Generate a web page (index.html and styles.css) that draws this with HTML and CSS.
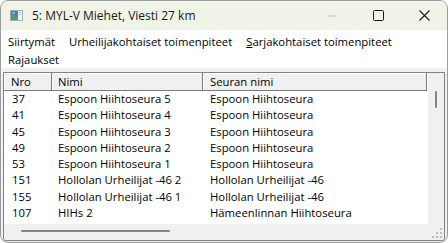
FILE: index.html
```html
<!DOCTYPE html>
<html>
<head>
<meta charset="utf-8">
<link rel="stylesheet" href="styles.css">
</head>
<body>
<div class="window">
  <div class="titlebar">
    <svg class="appicon" width="13" height="11" viewBox="0 0 13 11">
      <rect x="0" y="0" width="13" height="11" fill="#a3adb5"/>
      <rect x="1" y="1" width="11" height="9" fill="#eef1f3"/>
      <rect x="1" y="1" width="7" height="9" fill="#3d86a6"/>
      <rect x="1" y="5" width="7" height="5" fill="#4f9a78"/>
      <rect x="2" y="2" width="3" height="2" fill="#7fb6cf"/>
      <rect x="9" y="2" width="2" height="1" fill="#b0b8bf"/>
      <rect x="9" y="4" width="2" height="1" fill="#c4cbd1"/>
    </svg>
    <span class="title">5: MYL-V Miehet, Viesti 27 km</span>
    <div class="controls">
      <span class="ctl"><svg width="10" height="10" viewBox="0 0 10 10"><rect x="0" y="4.5" width="10" height="1" fill="#c4c4c4"/></svg></span>
      <span class="ctl"><svg width="11" height="11" viewBox="0 0 11 11"><rect x="0.5" y="0.5" width="10" height="10" rx="1" fill="none" stroke="#1a1a1a"/></svg></span>
      <span class="ctl"><svg width="11" height="11" viewBox="0 0 11 11"><path d="M0.5 0.5 L10.5 10.5 M10.5 0.5 L0.5 10.5" stroke="#1a1a1a" stroke-width="1.1"/></svg></span>
    </div>
  </div>
  <div class="menubar">
    <div class="menurow">
      <span class="mitem">Siirtymät</span>
      <span class="mitem">Urheilijakohtaiset toimenpiteet</span>
      <span class="mitem"><u>S</u>arjakohtaiset toimenpiteet</span>
    </div>
    <div class="menurow">
      <span class="mitem">Rajaukset</span>
    </div>
  </div>
  <div class="content">
    <div class="list">
      <div class="main">
        <div class="header">
          <div class="hcell c1">Nro</div>
          <div class="hcell c2">Nimi</div>
          <div class="hcell c3">Seuran nimi</div>
        </div>
        <div class="rows">
          <div class="row"><span class="c1">37</span><span class="c2">Espoon Hiihtoseura 5</span><span class="c3">Espoon Hiihtoseura</span></div>
          <div class="row"><span class="c1">41</span><span class="c2">Espoon Hiihtoseura 4</span><span class="c3">Espoon Hiihtoseura</span></div>
          <div class="row"><span class="c1">45</span><span class="c2">Espoon Hiihtoseura 3</span><span class="c3">Espoon Hiihtoseura</span></div>
          <div class="row"><span class="c1">49</span><span class="c2">Espoon Hiihtoseura 2</span><span class="c3">Espoon Hiihtoseura</span></div>
          <div class="row"><span class="c1">53</span><span class="c2">Espoon Hiihtoseura 1</span><span class="c3">Espoon Hiihtoseura</span></div>
          <div class="row"><span class="c1">151</span><span class="c2">Hollolan Urheilijat -46 2</span><span class="c3">Hollolan Urheilijat -46</span></div>
          <div class="row"><span class="c1">155</span><span class="c2">Hollolan Urheilijat -46 1</span><span class="c3">Hollolan Urheilijat -46</span></div>
          <div class="row"><span class="c1">107</span><span class="c2">HIHs 2</span><span class="c3">Hämeenlinnan Hiihtoseura</span></div>
        </div>
      </div>
      <div class="vscroll"><div class="vthumb"></div></div>
      <div class="hscroll"><div class="hthumb"></div></div>
      <div class="corner">
        <svg class="grip" width="12" height="12" viewBox="0 0 12 12">
          <rect x="9" y="1" width="2" height="2" fill="#bcbcbc"/>
          <rect x="9" y="5" width="2" height="2" fill="#bcbcbc"/>
          <rect x="9" y="9" width="2" height="2" fill="#bcbcbc"/>
          <rect x="5" y="5" width="2" height="2" fill="#bcbcbc"/>
          <rect x="5" y="9" width="2" height="2" fill="#bcbcbc"/>
          <rect x="1" y="9" width="2" height="2" fill="#bcbcbc"/>
        </svg>
      </div>
    </div>
  </div>
</div>
</body>
</html>
```
FILE: styles.css
```css
html, body {
  margin: 0;
  padding: 0;
  background: #ffffff;
}
body {
  font-family: "Open Sans", "Noto Sans", sans-serif;
  font-size: 11.3px;
  color: #000;
}
.window {
  width: 448px;
  height: 243px;
  box-sizing: border-box;
  border: 1px solid #9c9c9c;
  border-radius: 8px;
  overflow: hidden;
  display: flex;
  flex-direction: column;
  background: #f0f0f0;
}
.titlebar {
  height: 29px;
  flex: none;
  background: #eff4e6;
  display: flex;
  align-items: center;
}
.appicon {
  margin-left: 9px;
  margin-top: -1px;
}
.title {
  margin-left: 9px;
  color: #1a1a1a;
  font-size: 12px;
}
.controls {
  margin-left: auto;
  display: flex;
  height: 100%;
}
.ctl {
  width: 46px;
  display: flex;
  align-items: center;
  justify-content: center;
}
.menubar {
  flex: none;
  height: 38px;
  box-sizing: border-box;
  padding-top: 3px;
  padding-left: 0;
  background: #ffffff;
}
.menurow {
  display: flex;
  height: 18px;
  line-height: 18px;
}
.mitem {
  padding: 0 7px;
  white-space: nowrap;
}
.content {
  flex: 1;
  padding: 4px 2px 1px 2px;
  display: flex;
  min-height: 0;
}
.list {
  flex: 1;
  border: 1px solid #828282;
  border-radius: 0 0 3px 3px;
  display: grid;
  grid-template-columns: 1fr 16px;
  grid-template-rows: 1fr 16px;
  min-height: 0;
  overflow: hidden;
}
.main {
  background: #ffffff;
  overflow: hidden;
}
.header {
  display: flex;
  height: 18px;
  width: 423px;
}
.hcell {
  box-sizing: border-box;
  height: 18px;
  line-height: 17px;
  background: #f0f0f0;
  border-right: 1px solid #7a7a7a;
  border-bottom: 1px solid #7a7a7a;
  box-shadow: inset 1px 1px 0 #ffffff;
  white-space: nowrap;
}
.header .c1 { width: 48px; padding-left: 7px; }
.header .c2 { width: 151px; padding-left: 6px; }
.header .c3 { width: 224px; padding-left: 7px; }
.row {
  display: flex;
  height: 16.3px;
  line-height: 16px;
  white-space: nowrap;
}
.row .c1 { width: 48px; padding-left: 8px; box-sizing: border-box; }
.row .c2 { width: 151px; padding-left: 6px; box-sizing: border-box; }
.row .c3 { width: 224px; padding-left: 7px; box-sizing: border-box; }
.vscroll {
  background: #f0f0f0;
  position: relative;
}
.vthumb {
  position: absolute;
  left: 7px;
  top: 18px;
  width: 2px;
  height: 17px;
  border-radius: 1px;
  background: #858585;
}
.hscroll {
  background: #f0f0f0;
  position: relative;
}
.hthumb {
  position: absolute;
  left: 17px;
  top: 6px;
  width: 149px;
  height: 2px;
  border-radius: 1px;
  background: #858585;
}
.corner {
  background: #f0f0f0;
  position: relative;
}
.grip {
  position: absolute;
  right: 1px;
  bottom: 1px;
}
```
